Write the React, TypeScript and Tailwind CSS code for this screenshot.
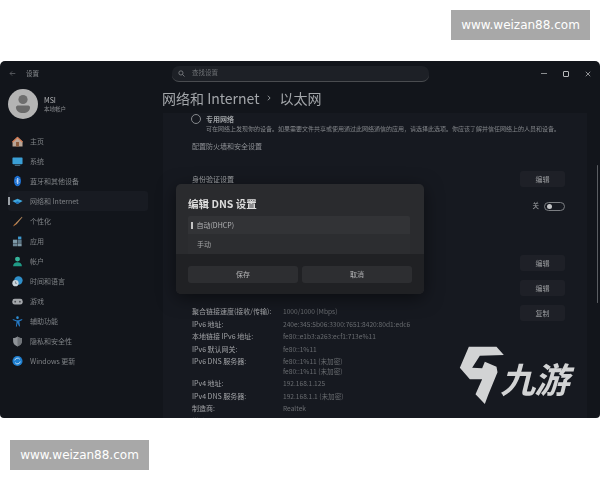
import React from "react";

const cjk = "font-['Noto_Sans_CJK_SC','Liberation_Sans',sans-serif]";

function Watermark() {
  return (
    <div className="flex h-[30px] w-[139px] items-center justify-center bg-[#a8a8a8] font-['DejaVu_Sans',sans-serif] text-[12px] font-medium text-white">
      www.weizan88.com
    </div>
  );
}

const icons: Record<string, React.ReactNode> = {
  home: (
    <svg viewBox="0 0 12 12" className="h-[11px] w-[11px]">
      <path d="M6 .8 11.5 6v5.500H.6V6z" fill="#b9a596" />
      <path d="M4.400 6.500h3.200v5H4.400z" fill="#8a5a3c" />
      <path d="M6 .8 0 6.300l.8.7L6 2.400 11.200 7l.8-.7z" fill="#d8764c" />
    </svg>
  ),
  system: (
    <svg viewBox="0 0 12 12" className="h-[11px] w-[11px]">
      <rect x="0.5" y="1.5" width="11" height="7.5" rx="0.8" fill="#3a9fd6" />
      <rect x="3" y="9.6" width="6" height="1.2" fill="#4a6f86" />
    </svg>
  ),
  bluetooth: (
    <svg viewBox="0 0 12 12" className="h-[12px] w-[11px]">
      <ellipse cx="6" cy="6" rx="3.8" ry="5.6" fill="#1c6fd0" />
      <path d="M4.300 4.200 7.600 7.600 6 9.200V2.800l1.600 1.600-3.300 3.400" fill="none" stroke="#e4eefb" strokeWidth="0.7" />
    </svg>
  ),
  network: (
    <svg viewBox="0 0 12 12" className="h-[11px] w-[11px]">
      <path d="M0.400 5.400 6 3l5.600 2.400L6 8.600z" fill="#3fa6dd" />
      <path d="M3 7 6 5.600 9 7 6 8.800z" fill="#1d6fb8" />
    </svg>
  ),
  brush: (
    <svg viewBox="0 0 12 12" className="h-[11px] w-[11px]">
      <path d="M10.800.8 3.600 8.200l1.200 1.200L11.400 1.400z" fill="#b98a5e" />
      <path d="M3.400 8.200 1 11.400l3.600-2z" fill="#d98742" />
    </svg>
  ),
  apps: (
    <svg viewBox="0 0 12 12" className="h-[11px] w-[11px]">
      <rect x="1" y="4" width="4.5" height="3.6" fill="#7f9aa8" />
      <rect x="1" y="8" width="4.5" height="3.2" fill="#6e8797" />
      <rect x="6" y="8" width="4.5" height="3.2" fill="#7f9aa8" />
      <rect x="6" y="4" width="4.5" height="3.6" fill="#5d7686" />
      <rect x="6.6" y="0.6" width="3.6" height="3" fill="#3d9ad0" />
    </svg>
  ),
  account: (
    <svg viewBox="0 0 12 12" className="h-[11px] w-[11px]">
      <circle cx="6" cy="3.4" r="2.7" fill="#35b39a" />
      <path d="M1.200 11.200c0-3.200 2-4.400 4.800-4.400s4.800 1.200 4.800 4.400z" fill="#1f9a86" />
    </svg>
  ),
  time: (
    <svg viewBox="0 0 12 12" className="h-[11px] w-[11px]">
      <circle cx="7" cy="5" r="4.6" fill="#2f8fc9" />
      <circle cx="3.8" cy="7.8" r="3.4" fill="#c9d3da" />
      <path d="M3.800 5.800v2.200h1.600" fill="none" stroke="#5a6670" strokeWidth="0.7" />
    </svg>
  ),
  game: (
    <svg viewBox="0 0 12 12" className="h-[11px] w-[11px]">
      <rect x="0.4" y="3" width="11.2" height="6.4" rx="2.6" fill="#a3a6aa" />
      <circle cx="3.5" cy="6.2" r="1" fill="#4a4d52" />
      <circle cx="8.6" cy="6.2" r="1" fill="#4a4d52" />
    </svg>
  ),
  access: (
    <svg viewBox="0 0 12 12" className="h-[11px] w-[11px]">
      <circle cx="6" cy="1.8" r="1.4" fill="#2e8fd6" />
      <path d="M1 3.400 5 4.600h2l4-1.200.3.900-3.300 1.600.8 5.400-1 .2L6 7.600l-.8 4-1-.2.8-5.400L.7 4.300z" fill="#2577c0" />
    </svg>
  ),
  shield: (
    <svg viewBox="0 0 12 12" className="h-[11px] w-[11px]">
      <path d="M6 .6c1.600 1.200 3.200 1.600 4.800 1.600v3.600c0 2.800-2 4.600-4.800 5.600-2.800-1-4.800-2.800-4.800-5.600V2.200C2.800 2.200 4.400 1.800 6 .6z" fill="#8f9398" />
      <path d="M6 .6c1.600 1.200 3.200 1.600 4.800 1.600v3.600c0 2.800-2 4.600-4.800 5.600z" fill="#6f7378" />
    </svg>
  ),
  update: (
    <svg viewBox="0 0 12 12" className="h-[12px] w-[12px]">
      <circle cx="6" cy="6" r="5.5" fill="#1f7fd0" />
      <path d="M3 5.400A3.100 3.100 0 0 1 8.600 4.200M9 6.600a3.100 3.100 0 0 1-5.600 1.200" fill="none" stroke="#d6e9f8" strokeWidth="0.9" />
    </svg>
  ),
};

const nav = [
  ["home", "主页"],
  ["system", "系统"],
  ["bluetooth", "蓝牙和其他设备"],
  ["network", "网络和 Internet"],
  ["brush", "个性化"],
  ["apps", "应用"],
  ["account", "帐户"],
  ["time", "时间和语言"],
  ["game", "游戏"],
  ["access", "辅助功能"],
  ["shield", "隐私和安全性"],
  ["update", "Windows 更新"],
];

const details: [string, string[]][] = [
  ["聚合链接速度(接收/传输):", ["1000/1000 (Mbps)"]],
  ["IPv6 地址:", ["240e:345:5b06:3300:7651:8420:80d1:edc6"]],
  ["本地链接 IPv6 地址:", ["fe80::e1b3:a263:ecf1:713e%11"]],
  ["IPv6 默认网关:", ["fe80::1%11"]],
  ["IPv6 DNS 服务器:", ["fe80::1%11 (未加密)", "fe80::1%11 (未加密)"]],
  ["IPv4 地址:", ["192.168.1.125"]],
  ["IPv4 DNS 服务器:", ["192.168.1.1 (未加密)"]],
  ["制造商:", ["Realtek"]],
  ["描述:", ["Realtek PCIe GbE Family Controller"]],
];

function EditButton({ label }: { label: string }) {
  return (
    <div className="flex h-[16px] w-[45px] items-center justify-center rounded-[3px] bg-[#1e2027] text-[7px] text-[#9a9c9f]">
      {label}
    </div>
  );
}

export default function App() {
  return (
    <div className={`h-[480px] w-[600px] overflow-hidden bg-white ${cjk}`}>
      <div className="flex h-[61px] justify-end pt-[10px] pr-[10px]">
        <Watermark />
      </div>

      <div className="relative flex h-[357px] w-[600px] overflow-hidden rounded-t-[5px] rounded-b-[4px] bg-[#12151b] blur-[0.4px]">
        {/* Sidebar */}
        <aside className="flex w-[163px] shrink-0 flex-col">
          <div className="flex h-[25px] items-center gap-[10px] pl-[9px] text-[6.5px] text-[#8d9094]">
            <svg viewBox="0 0 10 10" className="h-[7px] w-[7px]" fill="none" stroke="#6d7074" strokeWidth="1">
              <path d="M9 5H1.500M4.500 2 1.500 5l3 3" />
            </svg>
            <span>设置</span>
          </div>
          <div className="flex h-[36px] items-center gap-[6px] pl-[8px]">
            <div className="relative flex h-[30px] w-[30px] items-center justify-center overflow-hidden rounded-full bg-[#b4b4b4]">
              <svg viewBox="0 0 30 30" className="h-[30px] w-[30px]">
                <circle cx="15" cy="10.5" r="4.6" fill="#6e6e6e" />
                <path d="M8 18.500c0-1.500 1-2 2.500-2h9c1.500 0 2.500.5 2.500 2 0 3.500-3 5.500-7 5.500s-7-2-7-5.500z" fill="#6a6a6a" />
              </svg>
            </div>
            <div className="flex flex-col">
              <span className="text-[7px] leading-[9px] text-[#b4b6b8]">MSI</span>
              <span className="text-[5.5px] leading-[8px] text-[#8a8c90]">本地帐户</span>
            </div>
          </div>
          <nav className="mt-[9px] flex flex-col">
            {nav.map(([icon, label]) => {
              const active = icon === "network";
              return (
                <div
                  key={icon}
                  className={`relative ml-[8px] flex h-[20px] w-[140px] items-center gap-[7px] rounded-[3px] pl-[4px] text-[7px] text-[#7f8286] ${
                    active ? "bg-[#181b22]" : ""
                  }`}
                >
                  {active && <span className="absolute top-[6px] left-0 h-[8px] w-[1.5px] bg-[#9aa0a6]" />}
                  <span className="flex w-[11px] justify-center">{icons[icon]}</span>
                  <span>{label}</span>
                </div>
              );
            })}
          </nav>
        </aside>

        {/* Main */}
        <main className="flex min-w-0 flex-1 flex-col">
          <div className="flex h-[25px] shrink-0 items-center justify-between">
            <div className="ml-[9px] flex h-[16px] w-[257px] items-center gap-[7px] rounded-[7px] border-b border-b-[#4a4c50] bg-[#1d2026] pl-[6px] text-[6.5px] text-[#6f7276]">
              <svg viewBox="0 0 10 10" className="h-[7px] w-[7px]" fill="none" stroke="#8a8d90" strokeWidth="1.1">
                <circle cx="4.2" cy="4.2" r="3" />
                <path d="m6.500 6.500 2.800 2.800" />
              </svg>
              <span>查找设置</span>
            </div>
            <div className="mr-[9px] flex items-center gap-[16px]">
              <span className="h-px w-[6px] bg-[#8a8d90]" />
              <span className="h-[6px] w-[6px] rounded-[1px] border border-[#b8babc]" />
              <svg viewBox="0 0 8 8" className="h-[6px] w-[6px]" fill="none" stroke="#b8babc" strokeWidth="1">
                <path d="m1 1 6 6M7 1 1 7" />
              </svg>
            </div>
          </div>

          <div className="flex h-[27px] shrink-0 items-center pb-[3px] text-[14px] leading-none text-[#a3a6aa]">
            <span className="-ml-px">网络和 Internet</span>
            <svg viewBox="0 0 8 8" className="mx-[7px] h-[6px] w-[6px]" fill="none" stroke="#a3a6aa" strokeWidth="1.2">
              <path d="m2.500 1 3 3-3 3" />
            </svg>
            <span>以太网</span>
          </div>

          <div className="flex min-h-0 flex-1">
            <section className="mr-[12px] flex-1 overflow-hidden bg-[#161920] pr-[22px] pl-[29px]">
              <div className="flex items-center gap-[5px] pt-[1px]">
                <span className="-ml-[1px] h-[10px] w-[10px] rounded-full border border-[#85888c]" />
                <span className="text-[7px] leading-[9px] font-bold text-[#9ea1a4]">专用网络</span>
              </div>
              <p className="mt-px ml-[14px] text-[6px] leading-[8px] whitespace-nowrap text-[#83868a]">
                可在网络上发现你的设备。如果需要文件共享或使用通过此网络通信的应用，请选择此选项。你应该了解并信任网络上的人员和设备。
              </p>
              <p className="mt-[8px] text-[7px] leading-[10px] text-[#8d9094]">配置防火墙和安全设置</p>

              <div className="mt-[20px] flex h-[16px] items-center justify-between">
                <span className="text-[7px] text-[#a0a3a6]">身份验证设置</span>
                <EditButton label="编辑" />
              </div>

              <div className="mt-[11px] flex h-[16px] items-center justify-end gap-[5px] text-[6.5px] text-[#9ea1a4]">
                <span>关</span>
                <span className="flex h-[9px] w-[21px] items-center rounded-full border border-[#7b7e82] pl-[2px]">
                  <span className="h-[5px] w-[5px] rounded-full bg-[#c2c4c6]" />
                </span>
              </div>

              <div className="mt-[41px] flex items-start justify-between">
                <div className="mt-[50px] flex flex-col">
                  {details.map(([label, values]) => (
                    <div key={label} className="flex leading-[12.5px]">
                      <span className="w-[91px] shrink-0 text-[7px] text-[#a0a2a5]">{label}</span>
                      <div className="flex flex-col text-[6.6px] whitespace-nowrap text-[#696c70]">
                        {values.map((value, i) => (
                          <span key={i} className={i > 0 ? "-mt-[3px]" : ""}>
                            {value}
                          </span>
                        ))}
                      </div>
                    </div>
                  ))}
                </div>
                <div className="flex flex-col gap-[9px]">
                  <EditButton label="编辑" />
                  <EditButton label="编辑" />
                  <EditButton label="复制" />
                </div>
              </div>
            </section>
            <div className="w-[1px]" />
          </div>
        </main>

        {/* Scrollbar */}
        <span className="absolute top-[104px] right-[2px] h-[138px] w-[1.5px] rounded-full bg-[#5a5d62]" />

        {/* Dialog */}
        <div className="absolute top-[123px] left-[176px] flex h-[110px] w-[248px] flex-col overflow-hidden rounded-[5px] bg-[#2a2b2e] shadow-[0_4px_18px_rgba(0,0,0,0.5)]">
          <div className="flex flex-1 flex-col px-[12px]">
            <div className="flex h-[32px] shrink-0 items-end pb-[5px] text-[10.5px] leading-[14px] font-bold text-[#dcdcdc]">
              编辑 DNS 设置
            </div>
            <div className="flex h-[18px] w-[222px] items-center gap-[4px] rounded-t-[2px] bg-[#323336] text-[7px] text-[#b4b5b7]">
              <span className="ml-[3px] h-[7px] w-[1.5px] bg-[#c4c4c4]" />
              <span>自动(DHCP)</span>
            </div>
            <div className="flex h-[20px] w-[222px] items-center bg-[#2c2d30] pl-[9px] text-[7px] text-[#a4a5a7]">手动</div>
          </div>
          <div className="flex h-[40px] shrink-0 items-start gap-[4px] bg-[#202124] px-[12px] pt-[12px]">
            <div className="flex h-[17px] w-[110px] items-center justify-center rounded-[3px] bg-[#2d2e31] text-[7px] text-[#b4b5b7]">保存</div>
            <div className="flex h-[17px] w-[110px] items-center justify-center rounded-[3px] bg-[#2d2e31] text-[7px] text-[#b4b5b7]">取消</div>
          </div>
        </div>

        {/* Logo overlay */}
        <div className="absolute top-[284px] left-[458px] flex items-end">
          <svg viewBox="10 10 140 180" className="h-[60px] w-[47px]">
            <path d="M42 15H125L147 40 75 42 52 78 82 80 90 60 125 75 128 92 100 160 90 187 62 158 82 113H45L15 78Z" fill="#d2d3d4" />
          </svg>
          <span className="mb-[10px] -ml-[1px] -skew-x-[14deg] text-[35px] leading-none font-bold tracking-[-1px] text-[#d2d3d4]">九游</span>
        </div>
      </div>

      <div className="pt-[22px] pl-[10px]">
        <Watermark />
      </div>
    </div>
  );
}
